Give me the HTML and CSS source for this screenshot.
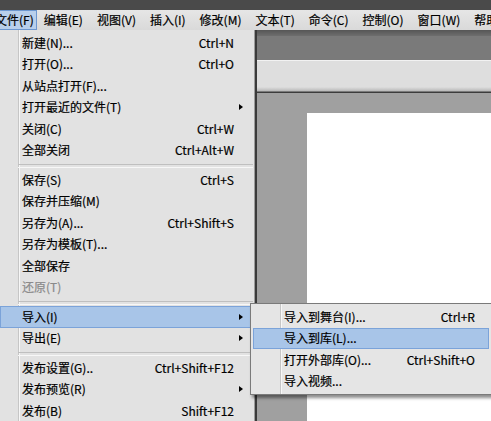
FILE: index.html
```html
<!DOCTYPE html>
<html lang="zh-CN">
<head>
<meta charset="utf-8">
<title>文件菜单</title>
<link rel="stylesheet" href="styles.css">
</head>
<body>
<div class="app">
  <div class="titlebar"></div>
  <div class="menubar">
    <span class="mb-item active">文件(F)</span>
    <span class="mb-item">编辑(E)</span>
    <span class="mb-item">视图(V)</span>
    <span class="mb-item">插入(I)</span>
    <span class="mb-item">修改(M)</span>
    <span class="mb-item">文本(T)</span>
    <span class="mb-item">命令(C)</span>
    <span class="mb-item">控制(O)</span>
    <span class="mb-item">窗口(W)</span>
    <span class="mb-item">帮助(H)</span>
  </div>
  <div class="workspace">
    <div class="sidebar"></div>
    <div class="main">
      <div class="strip"></div>
      <div class="topgray"></div>
      <div class="toolbar"></div>
      <div class="stage-area"><div class="stage"></div></div>
    </div>
  </div>

  <div class="menu file-menu">
    <div class="item"><span class="label">新建(N)...</span><span class="key">Ctrl+N</span></div>
    <div class="item"><span class="label">打开(O)...</span><span class="key">Ctrl+O</span></div>
    <div class="item"><span class="label">从站点打开(F)...</span></div>
    <div class="item"><span class="label">打开最近的文件(T)</span><span class="arrow"></span></div>
    <div class="item"><span class="label">关闭(C)</span><span class="key">Ctrl+W</span></div>
    <div class="item"><span class="label">全部关闭</span><span class="key">Ctrl+Alt+W</span></div>
    <div class="sep"></div>
    <div class="item"><span class="label">保存(S)</span><span class="key">Ctrl+S</span></div>
    <div class="item"><span class="label">保存并压缩(M)</span></div>
    <div class="item"><span class="label">另存为(A)...</span><span class="key">Ctrl+Shift+S</span></div>
    <div class="item"><span class="label">另存为模板(T)...</span></div>
    <div class="item"><span class="label">全部保存</span></div>
    <div class="item disabled"><span class="label">还原(T)</span></div>
    <div class="sep"></div>
    <div class="item selected"><span class="label">导入(I)</span><span class="arrow"></span></div>
    <div class="item"><span class="label">导出(E)</span><span class="arrow"></span></div>
    <div class="sep"></div>
    <div class="item"><span class="label">发布设置(G)..</span><span class="key">Ctrl+Shift+F12</span></div>
    <div class="item"><span class="label">发布预览(R)</span><span class="arrow"></span></div>
    <div class="item"><span class="label">发布(B)</span><span class="key">Shift+F12</span></div>
  </div>

  <div class="menu sub-menu">
    <div class="item"><span class="label">导入到舞台(I)...</span><span class="key">Ctrl+R</span></div>
    <div class="item selected"><span class="label">导入到库(L)...</span></div>
    <div class="item"><span class="label">打开外部库(O)...</span><span class="key">Ctrl+Shift+O</span></div>
    <div class="item"><span class="label">导入视频...</span></div>
  </div>
</div>
</body>
</html>
```

FILE: styles.css
```css
* { box-sizing: border-box; }

html, body {
  margin: 0;
  padding: 0;
}

body {
  width: 491px;
  height: 421px;
  overflow: hidden;
  background: #a0a0a0;
  font-family: "Noto Sans CJK SC", "Noto Sans", sans-serif;
  font-size: 12px;
  color: #000;
  -webkit-text-stroke: 0.2px currentColor;
}

.app {
  position: relative;
  width: 491px;
  height: 421px;
  overflow: hidden;
}

.titlebar {
  height: 10px;
  background: #4a4a4a;
}

.menubar {
  height: 20px;
  display: flex;
  align-items: stretch;
  background: linear-gradient(#e6e6e6, #d9d9d9);
  white-space: nowrap;
}

.mb-item {
  display: flex;
  align-items: center;
  padding: 0 6px;
  border: 1px solid transparent;
  line-height: 1;
}

.mb-item:first-child {
  margin-left: -12px;
  padding-right: 2px;
}

.mb-item.active {
  background: #b8cfeb;
  border-color: #6d97cf;
}

.workspace {
  height: 391px;
  display: grid;
  grid-template-columns: 255px 1fr;
}

.sidebar {
  background: #e1e1e1;
}

.main {
  display: flex;
  flex-direction: column;
  border-left: 2px solid #3a3a3a;
  background: #a0a0a0;
}

.strip {
  height: 6px;
  background: linear-gradient(#565656, #6e6e6e);
}

.topgray {
  height: 24px;
  background: #7a7a7a;
}

.toolbar {
  height: 33px;
  background: linear-gradient(#dedede 0, #dedede 26px, #b9b9b9 30px, #3c3c3c 31px, #3c3c3c 33px);
  border-top: 1px solid #f2f2f2;
}

.stage-area {
  flex: 1;
  padding: 20px 0 0 50px;
  background: #a0a0a0;
  display: flex;
}

.stage {
  flex: 1;
  background: #fff;
}

/* menus */
.menu {
  position: absolute;
}

.file-menu {
  left: 0;
  top: 30px;
  width: 255px;
  height: 391px;
  padding-top: 2px;
  border-right: 1px solid #9c9c9c;
  background: linear-gradient(to right, #e2e2e2 0, #e2e2e2 18px, #c6c6c6 18px, #c6c6c6 19px, #f7f7f7 19px, #f7f7f7 20px, #e2e2e2 20px);
}

.item {
  height: 21.5px;
  display: flex;
  align-items: center;
  border: 1px solid transparent;
  white-space: nowrap;
  line-height: 1;
}

.file-menu .item {
  margin-right: 1px;
  padding: 0 9px 0 21px;
}

.label {
  flex: 1;
}

.key {
  margin-right: 9px;
}

.arrow {
  width: 0;
  height: 0;
  border-left: 4px solid #000;
  border-top: 3.5px solid transparent;
  border-bottom: 3.5px solid transparent;
}

.item.disabled {
  color: #8a8a8a;
}

.item.selected {
  background: #a8c5e8;
  border-color: #7ba3d9;
}

.sep {
  height: 8px;
  position: relative;
}

.sep::after {
  content: "";
  position: absolute;
  left: 18px;
  right: 1px;
  top: 3px;
  height: 2px;
  border-top: 1px solid #bfbfbf;
  border-bottom: 1px solid #f7f7f7;
}

.sub-menu {
  left: 250px;
  top: 303px;
  width: 242px;
  padding: 2px 0;
  border: 1px solid #7a7a7a;
  background: linear-gradient(to right, #e5e5e5 0, #e5e5e5 29px, #c6c6c6 29px, #c6c6c6 30px, #f7f7f7 30px, #f7f7f7 31px, #e5e5e5 31px);
  box-shadow: 2px 3px 3px rgba(0, 0, 0, 0.45);
}

.sub-menu .item {
  margin: 0 2px;
  padding: 0 13px 0 30px;
}

.sub-menu .key {
  margin-right: 0;
}
```
